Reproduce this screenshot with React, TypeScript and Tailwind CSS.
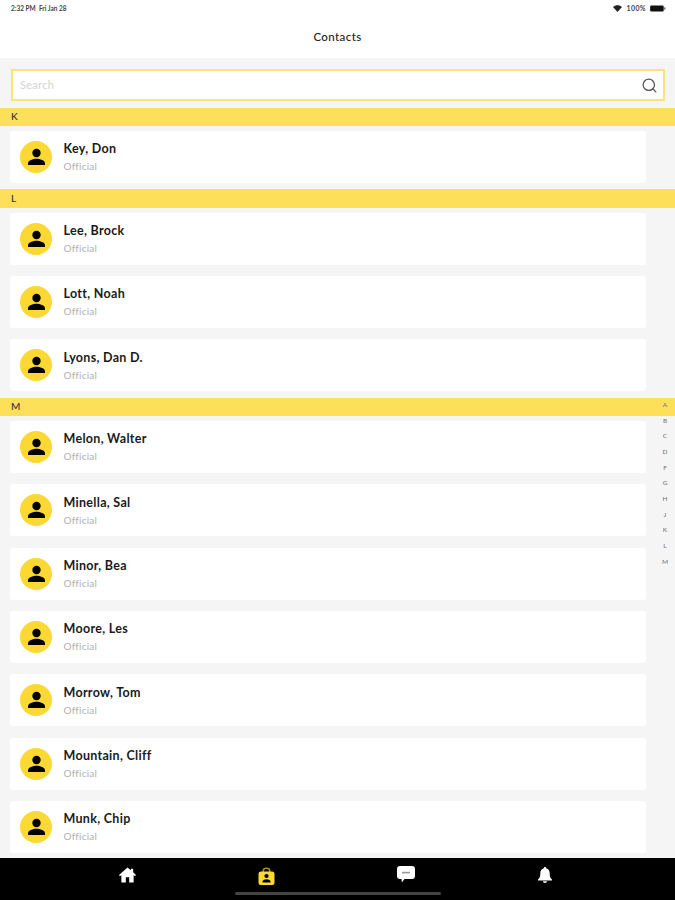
import { Search } from 'lucide-react'

const sections = [
  { letter: 'K', names: ['Key, Don'] },
  { letter: 'L', names: ['Lee, Brock', 'Lott, Noah', 'Lyons, Dan D.'] },
  {
    letter: 'M',
    names: ['Melon, Walter', 'Minella, Sal', 'Minor, Bea', 'Moore, Les', 'Morrow, Tom', 'Mountain, Cliff', 'Munk, Chip'],
  },
]

const indexLetters = ['A', 'B', 'C', 'D', 'F', 'G', 'H', 'J', 'K', 'L', 'M']

function PersonIcon() {
  return (
    <svg viewBox="0 0 32 32" className="w-[32px] h-[32px]">
      <circle cx="16" cy="16" r="16" fill="#fbd834" />
      <circle cx="16.5" cy="12" r="4.2" fill="#000" />
      <path d="M8 24v-1.6c0-3 5.2-4.6 8.5-4.6s8.5 1.6 8.5 4.6V24z" fill="#000" />
    </svg>
  )
}

function ContactRow({ name }: { name: string }) {
  return (
    <div className="h-[52px] bg-white rounded-[3px] flex items-center pl-[10px] w-[636px] ml-[10px]">
      <PersonIcon />
      <div className="ml-[11.5px] flex flex-col">
        <span className="text-[12.5px] leading-[17px] font-bold text-[#1a1a1a] tracking-[0.3px]">{name}</span>
        <span className="text-[10px] leading-[14px] mt-[2px] text-[#b0b0b0] tracking-[0.2px]">Official</span>
      </div>
    </div>
  )
}

export default function App() {
  return (
    <div className="relative w-[675px] h-[900px] overflow-hidden flex flex-col bg-[#f5f5f6] font-['Lato',sans-serif]">
      <div className="h-[58px] shrink-0 bg-white relative">
        <div className="flex justify-between items-center pl-[11px] pr-[9px] pt-[3px] h-[14px] text-[6.5px] font-bold text-[#444]">
          <span>2:32 PM&nbsp; Fri Jan 28</span>
          <div className="flex items-center gap-[4px]">
            <svg viewBox="0 0 12 9" className="w-[9px] h-[7px]">
              <path d="M6 9 0 2.5C3.5-.8 8.500-.8 12 2.500z" fill="#222" />
            </svg>
            <span className="text-[7px] tracking-[0.4px]">100%</span>
            <svg viewBox="0 0 18 8" className="w-[16px] h-[7px]">
              <rect x="0" y="0.500" width="15.500" height="7" rx="1.500" fill="#111" />
              <rect x="16" y="2.500" width="1.500" height="3" rx="0.700" fill="#666" />
            </svg>
          </div>
        </div>
        <div className="text-center text-[11.5px] leading-[14px] mt-[16px] text-[#222] font-medium tracking-[0.4px]">
          Contacts
        </div>
      </div>

      <div className="shrink-0 pl-[11px] pr-[10px] pt-[11px]">
        <div className="h-[32px] bg-white border-2 border-[#fde27a] flex items-center justify-between pl-[7px] pr-[5px]">
          <span className="text-[11px] text-[#d4d4d4] tracking-[0.3px]">Search</span>
          <Search size={17} strokeWidth={1.800} className="text-[#555]" />
        </div>
      </div>

      <div className="flex-1 overflow-hidden pt-[6.6px]">
        {sections.map((section) => (
          <div key={section.letter} className="pb-[6.33px]">
            <div className="h-[18.33px] bg-[#fddf5a] pl-[11px] flex items-center text-[10px] text-[#333] font-medium">
              {section.letter}
            </div>
            <div className="flex flex-col gap-[11.33px] pt-[5px]">
              {section.names.map((name) => (
                <ContactRow key={name} name={name} />
              ))}
            </div>
          </div>
        ))}
      </div>

      <div className="absolute right-[7px] top-[397px] w-[6px] flex flex-col items-center">
        {indexLetters.map((l) => (
          <span key={l} className="h-[15.700px] flex items-center text-[6.500px] font-medium text-[#777]">
            {l}
          </span>
        ))}
      </div>

      <div className="relative h-[42px] shrink-0 bg-black grid grid-cols-4 pt-[9px] pl-[58px] pr-[60px]">
        <div className="flex justify-center">
          <svg viewBox="0 0 18 16" className="w-[17px] h-[16px]">
            <path
              fillRule="evenodd"
              d="M9 0 12.500 3V1.500H15V5.200L18 8 17 9.200 15.500 8V16H10.800V10.500H7.200V16H2.500V8L1 9.200 0 8z"
              fill="#fff"
            />
          </svg>
        </div>
        <div className="flex justify-center">
          <svg viewBox="0 0 17 18" className="w-[17px] h-[18px]">
            <path d="M4.500 5V3.500C4.500 1.500 6 .5 8.500.5s4 1 4 3V5h-1.600V3.700c0-1-.9-1.600-2.400-1.600s-2.400.6-2.400 1.600V5z" fill="#a89020" />
            <rect x="0.500" y="4.500" width="16" height="13.500" rx="2.500" fill="#fbd834" />
            <circle cx="8.500" cy="9" r="2.100" fill="#000" />
            <path d="M4.500 15.500v-1c0-1.500 2.500-2.200 4-2.200s4 .7 4 2.200v1z" fill="#000" />
          </svg>
        </div>
        <div className="flex justify-center">
          <svg viewBox="0 0 18 17" className="w-[18px] h-[17px] -mt-[1px]">
            <path d="M3 0h12a3 3 0 0 1 3 3v7a3 3 0 0 1-3 3H7.500L4.800 16.500 4.500 13H3a3 3 0 0 1-3-3V3a3 3 0 0 1 3-3z" fill="#fff" />
            <path d="M5 5.800h8v1.600H5z" fill="#999" />
          </svg>
        </div>
        <div className="flex justify-center">
          <svg viewBox="0 0 14 16" className="w-[14px] h-[16px]">
            <path d="M7 0c.7 0 1.200.5 1.200 1.200C10.500 1.800 11.700 3.800 11.700 6.200c0 3.300.6 4.800 2.300 6.300v.9H0v-.9c1.700-1.500 2.300-3 2.300-6.300 0-2.400 1.200-4.400 3.500-5C5.800.5 6.300 0 7 0z" fill="#fff" />
            <path d="M5 14.300h4C9 15.300 8.100 16 7 16s-2-.7-2-1.700z" fill="#fff" />
          </svg>
        </div>
        <div className="absolute left-[235px] top-[34px] w-[206px] h-[3px] rounded-full bg-[#444]" />
      </div>
    </div>
  )
}
